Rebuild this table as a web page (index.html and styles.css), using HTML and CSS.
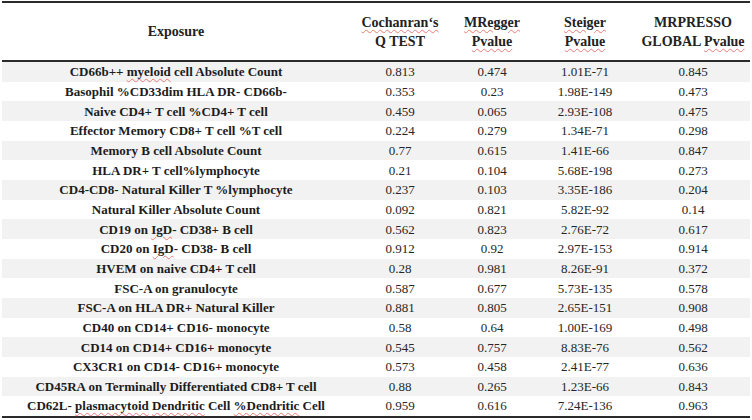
FILE: index.html
```html
<!DOCTYPE html>
<html>
<head>
<meta charset="utf-8">
<link rel="stylesheet" href="styles.css">
</head>
<body>
<table class="results">
  <colgroup>
    <col class="c-exp"><col class="c-q"><col class="c-mr"><col class="c-st"><col class="c-pr">
  </colgroup>
  <thead>
    <tr>
      <th>Exposure</th>
      <th><span class="sq">Cochanran‘s</span><br>Q TEST</th>
      <th><span class="sq">MRegger</span><br><span class="sq">Pvalue</span></th>
      <th><span class="sq">Steiger</span><br><span class="sq">Pvalue</span></th>
      <th>MRPRESSO<br>GLOBAL <span class="sq">Pvalue</span></th>
    </tr>
  </thead>
  <tbody>
    <tr><td class="exp">CD66b++ <span class="sq">myeloid</span> cell Absolute Count</td><td>0.813</td><td>0.474</td><td>1.01E-71</td><td>0.845</td></tr>
    <tr><td class="exp">Basophil %CD33dim HLA DR- CD66b-</td><td>0.353</td><td>0.23</td><td>1.98E-149</td><td>0.473</td></tr>
    <tr><td class="exp">Naive CD4+ T cell %CD4+ T cell</td><td>0.459</td><td>0.065</td><td>2.93E-108</td><td>0.475</td></tr>
    <tr><td class="exp">Effector Memory CD8+ T cell %T cell</td><td>0.224</td><td>0.279</td><td>1.34E-71</td><td>0.298</td></tr>
    <tr><td class="exp">Memory B cell Absolute Count</td><td>0.77</td><td>0.615</td><td>1.41E-66</td><td>0.847</td></tr>
    <tr><td class="exp">HLA DR+ T cell%lymphocyte</td><td>0.21</td><td>0.104</td><td>5.68E-198</td><td>0.273</td></tr>
    <tr><td class="exp">CD4-CD8- Natural Killer T %lymphocyte</td><td>0.237</td><td>0.103</td><td>3.35E-186</td><td>0.204</td></tr>
    <tr><td class="exp">Natural Killer Absolute Count</td><td>0.092</td><td>0.821</td><td>5.82E-92</td><td>0.14</td></tr>
    <tr><td class="exp">CD19 on <span class="sq">IgD</span>- CD38+ B cell</td><td>0.562</td><td>0.823</td><td>2.76E-72</td><td>0.617</td></tr>
    <tr><td class="exp">CD20 on <span class="sq">IgD</span>- CD38- B cell</td><td>0.912</td><td>0.92</td><td>2.97E-153</td><td>0.914</td></tr>
    <tr><td class="exp">HVEM on naive CD4+ T cell</td><td>0.28</td><td>0.981</td><td>8.26E-91</td><td>0.372</td></tr>
    <tr><td class="exp">FSC-A on granulocyte</td><td>0.587</td><td>0.677</td><td>5.73E-135</td><td>0.578</td></tr>
    <tr><td class="exp">FSC-A on HLA DR+ Natural Killer</td><td>0.881</td><td>0.805</td><td>2.65E-151</td><td>0.908</td></tr>
    <tr><td class="exp">CD40 on CD14+ CD16- monocyte</td><td>0.58</td><td>0.64</td><td>1.00E-169</td><td>0.498</td></tr>
    <tr><td class="exp">CD14 on CD14+ CD16+ monocyte</td><td>0.545</td><td>0.757</td><td>8.83E-76</td><td>0.562</td></tr>
    <tr><td class="exp">CX3CR1 on CD14- CD16+ monocyte</td><td>0.573</td><td>0.458</td><td>2.41E-77</td><td>0.636</td></tr>
    <tr><td class="exp">CD45RA on Terminally Differentiated CD8+ T cell</td><td>0.88</td><td>0.265</td><td>1.23E-66</td><td>0.843</td></tr>
    <tr><td class="exp">CD62L- <span class="sq">plasmacytoid</span> <span class="sq">Dendritic</span> Cell <span class="sq">%Dendritic</span> Cell</td><td>0.959</td><td>0.616</td><td>7.24E-136</td><td>0.963</td></tr>
  </tbody>
</table>
</body>
</html>
```
FILE: styles.css
```css
html, body {
  margin: 0;
  padding: 0;
  background: #ffffff;
}

body {
  font-family: "Liberation Serif", "Times New Roman", serif;
  color: #1f1f1f;
}

.results {
  margin: 1px 0 0 2px;
  width: 748px;
  table-layout: fixed;
  border-collapse: separate;
  border-spacing: 0;
}

.c-exp { width: 348px; }
.c-q { width: 100px; }
.c-mr { width: 84px; }
.c-st { width: 102px; }
.c-pr { width: 114px; }

.results th {
  font-size: 14px;
  font-weight: bold;
  line-height: 19px;
  text-align: center;
  vertical-align: middle;
  padding: 0;
  height: 57px;
  border-top: 2px solid #2b2b2b;
  border-bottom: 2px solid #2b2b2b;
  color: #222;
}

.results td {
  font-size: 13px;
  text-align: center;
  vertical-align: middle;
  padding: 0;
  height: 19.66px;
  line-height: 15px;
  white-space: nowrap;
  color: #262626;
}

.results td.exp {
  font-weight: bold;
  color: #1c1c1c;
}

.results tbody tr:nth-child(odd) td {
  background: #f2f2f2;
}

.results tbody tr:last-child td {
  border-bottom: 2px solid #2b2b2b;
}

.sq {
  text-decoration: underline wavy #e87a7a;
  text-decoration-thickness: 1px;
  text-underline-offset: 2px;
}
```
